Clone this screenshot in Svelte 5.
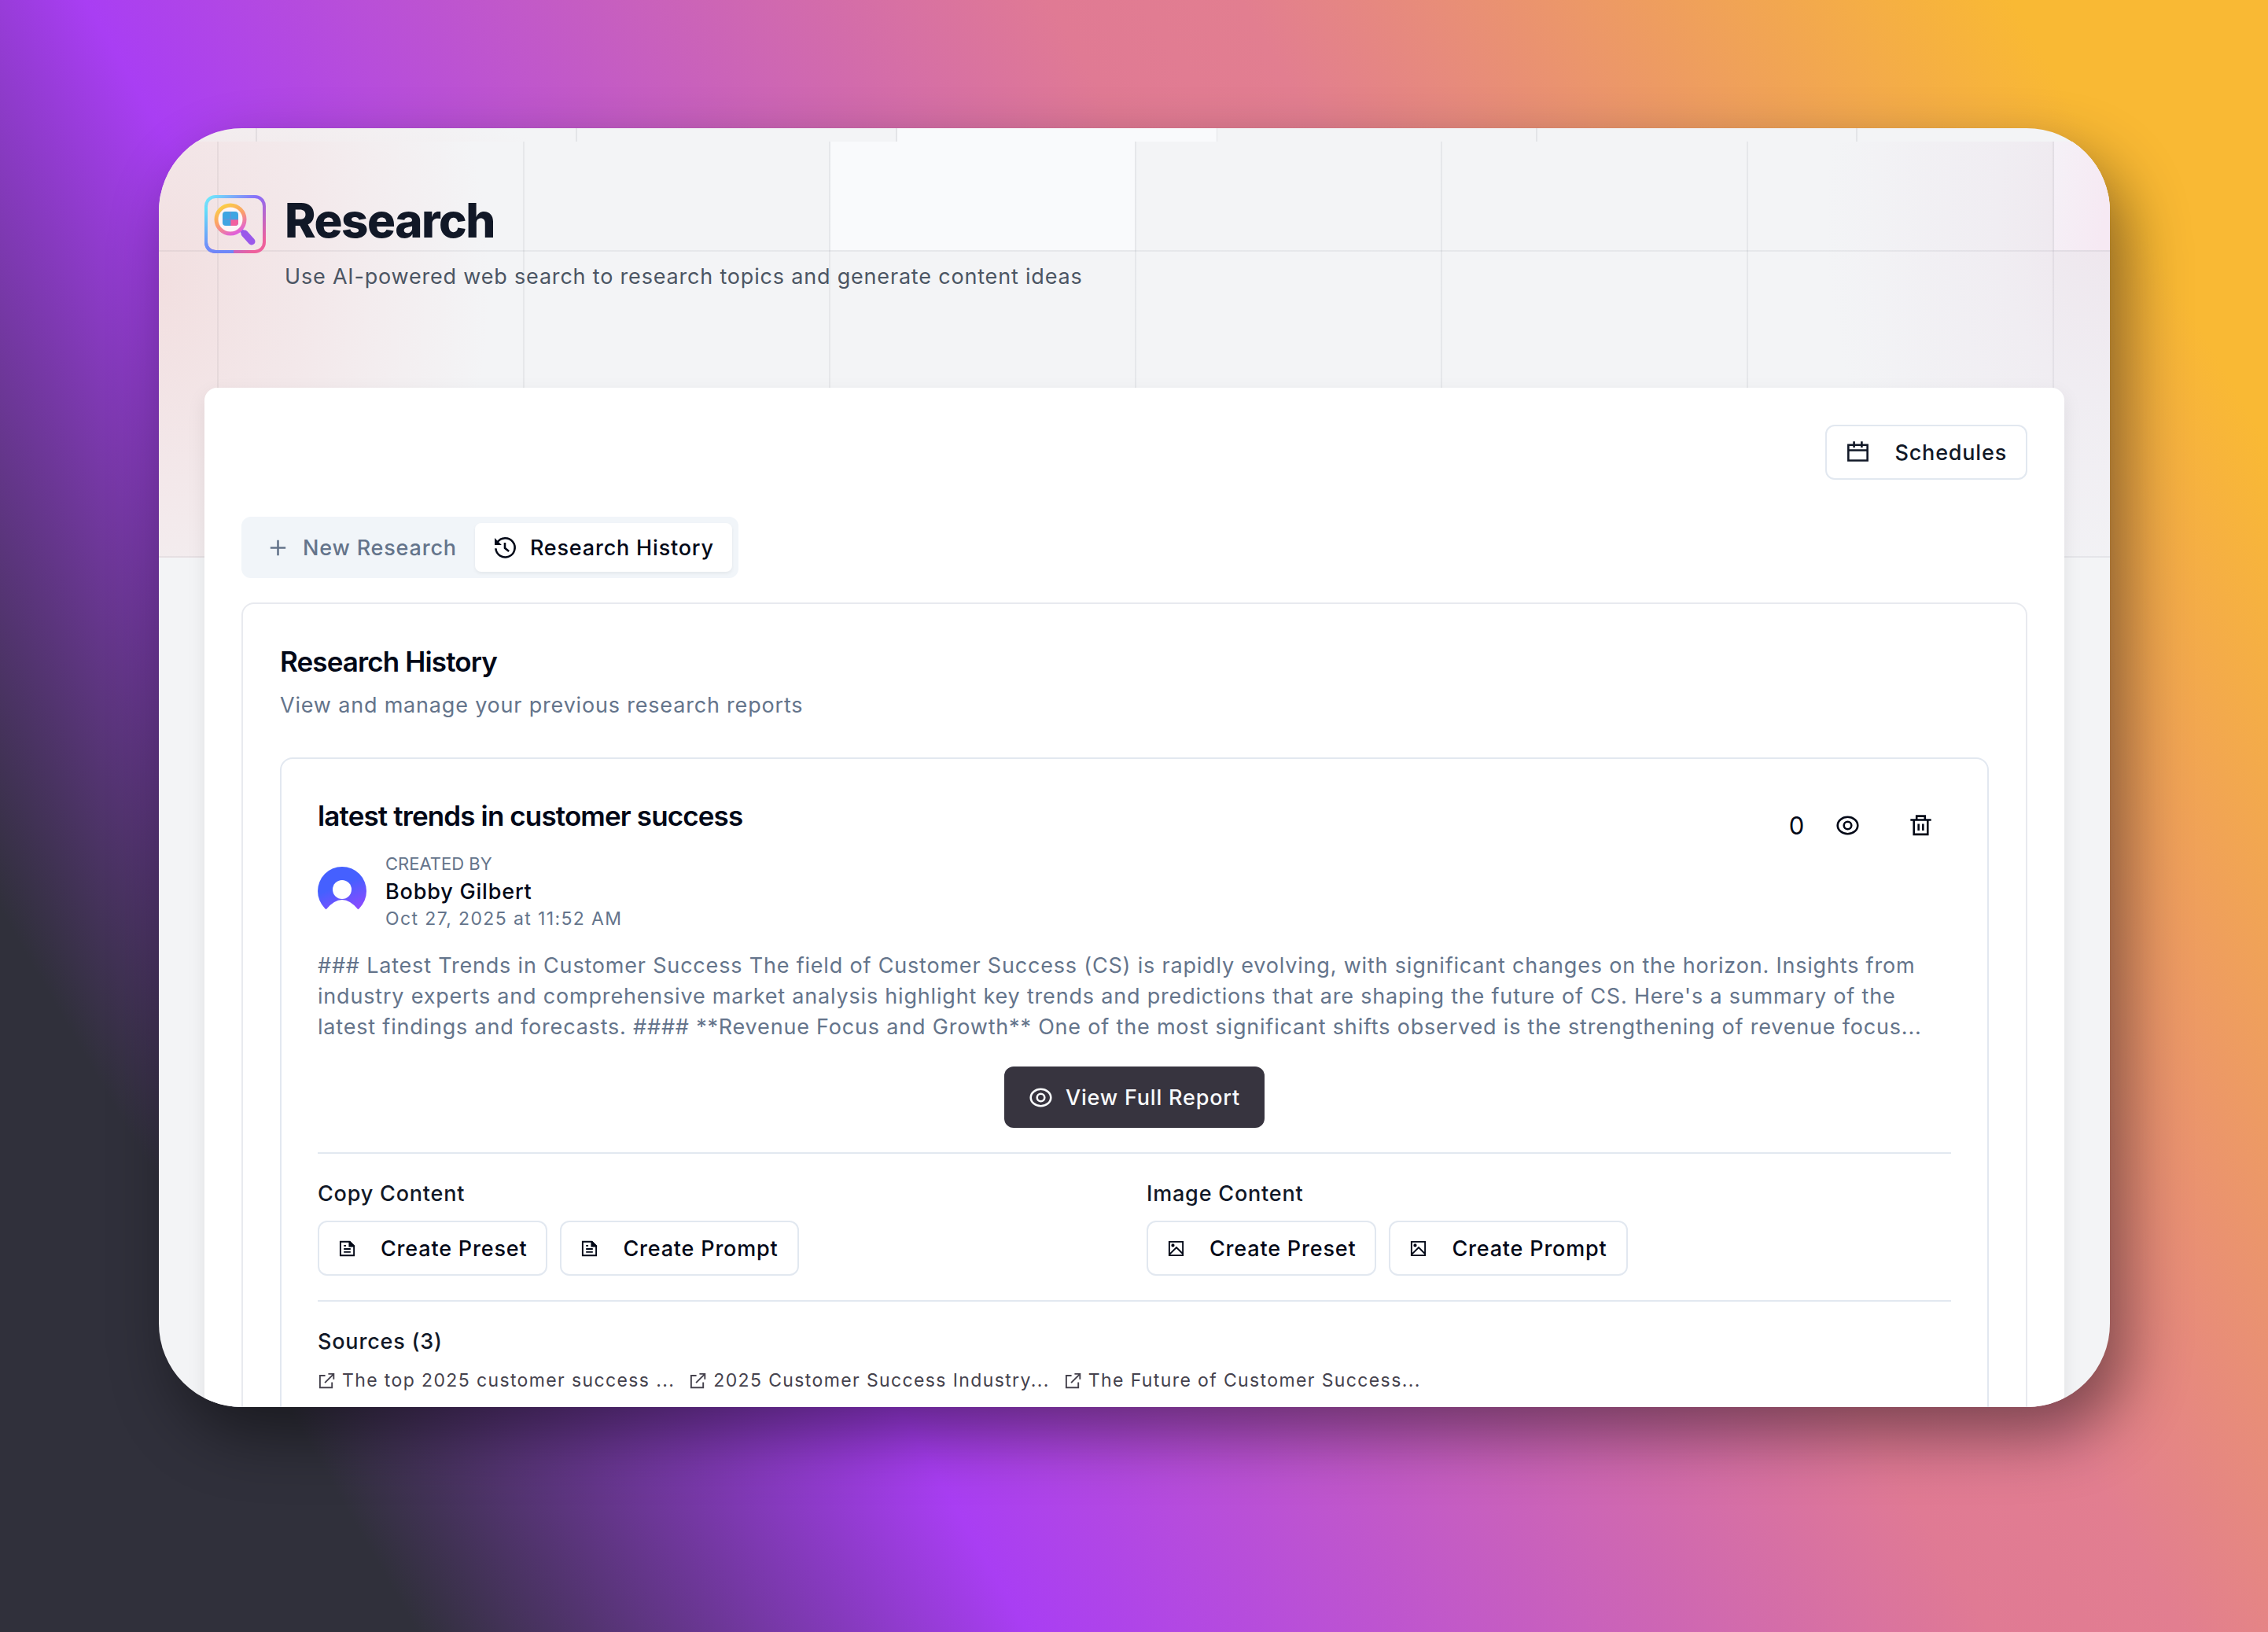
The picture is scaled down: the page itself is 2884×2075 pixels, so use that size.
<script>
let tab = 'history'

const tabs = [
    { id: 'new', label: 'New Research', icon: 'plus' },
    { id: 'history', label: 'Research History', icon: 'history' },
]

const report = {
    title: 'latest trends in customer success',
    author: 'Bobby Gilbert',
    created: 'Oct 27, 2025 at 11:52 AM',
    views: 0,
    summary: "### Latest Trends in Customer Success The field of Customer Success (CS) is rapidly evolving, with significant changes on the horizon. Insights from industry experts and comprehensive market analysis highlight key trends and predictions that are shaping the future of CS. Here's a summary of the latest findings and forecasts. #### **Revenue Focus and Growth** One of the most significant shifts observed is the strengthening of revenue focus...",
    sources: [
        'The top 2025 customer success ...',
        '2025 Customer Success Industry...',
        'The Future of Customer Success...',
    ],
}

const content = [
    { title: 'Copy Content', icon: 'doc' },
    { title: 'Image Content', icon: 'image' },
]
</script>

{#snippet icon(name, small = false)}
    <svg class="icon" class:small viewBox="0 0 24 24" fill="none" stroke="currentColor" stroke-width="2" aria-hidden="true">
        {#if name === 'plus'}
            <path d="M12 4.5v15M4.5 12h15" />
        {:else if name === 'history'}
            <path d="M4.2 6.6A9.4 9.4 0 1 1 2.6 12.6M11.6 7v5.2l4 3.2" />
            <path d="M1.6 2.4v6.8h6.8z" fill="currentColor" stroke="none" />
        {:else if name === 'calendar'}
            <path d="M2.6 4.4h18.8v15.4H2.6zM2.6 9.7h18.8M8.2 1v6M15.8 1v6" />
        {:else if name === 'eye'}
            <ellipse cx="12" cy="12" rx="9.9" ry="8.3" />
            <circle cx="12" cy="12" r="3.7" />
        {:else if name === 'trash'}
            <path d="M1.8 6.6h20.4M7.9 6.6V2.8h8.2v3.8M5.2 6.6v14.2h13.6V6.6M9.8 10.4v6.6M14.2 10.4v6.6" />
        {:else if name === 'doc'}
            <path d="M3 2.8h12l6 6v12.4H3z" />
            <path d="M14 2v8h8v-2l-6-6z" fill="currentColor" stroke="none" />
            <path d="M7.5 8.2h3M7.5 12.5h9M7.5 16.6h9" />
        {:else if name === 'image'}
            <path d="M3 3h18v18H3zM3.5 19.5l9-9 8.5 8.5" />
            <circle cx="7.8" cy="7.8" r="1.2" fill="currentColor" />
        {:else if name === 'external'}
            <path d="M10 5.2H3v16h16v-7M14 3h7.2v7.2M21 3.2L9.5 14.7" />
        {/if}
    </svg>
{/snippet}

<div class="stage">
    <main class="window">
        <div class="backdrop" aria-hidden="true">
            <div class="strip"></div>
            <div class="grid"></div>
        </div>

        <header class="page-head">
            <svg class="logo" viewBox="0 0 78 74" fill="none" aria-hidden="true">
                <defs>
                    <linearGradient id="frame" x1="0" y1="0" x2="1" y2="1">
                        <stop offset="0" stop-color="#6df0fb" />
                        <stop offset=".45" stop-color="#8a6cf8" />
                        <stop offset=".9" stop-color="#ee609c" />
                    </linearGradient>
                    <linearGradient id="frame-left" x1="0" y1="0" x2="0" y2="1">
                        <stop offset="0" stop-color="#62e4fa" />
                        <stop offset="1" stop-color="#6f86f8" />
                    </linearGradient>
                    <linearGradient id="lens" x1=".2" y1="0" x2=".7" y2="1">
                        <stop offset="0" stop-color="#fbd045" />
                        <stop offset=".5" stop-color="#fb9d6c" />
                        <stop offset="1" stop-color="#e05fdc" />
                    </linearGradient>
                    <linearGradient id="handle" x1="0" y1="0" x2="1" y2="1">
                        <stop offset="0" stop-color="#7a6cf5" />
                        <stop offset="1" stop-color="#a64fe6" />
                    </linearGradient>
                </defs>
                <rect x="2" y="2" width="74" height="70" rx="12" stroke="url(#frame)" stroke-width="4" />
                <path d="M2 15v44q0 13 13 13h22" stroke="url(#frame-left)" stroke-width="4" />
                <path d="M47 45l4 5" stroke="url(#handle)" stroke-width="5" />
                <path d="M51 49l9 10" stroke="#9a58ea" stroke-width="9" stroke-linecap="round" />
                <circle cx="33" cy="31" r="18" fill="#fdf5f7" stroke="url(#lens)" stroke-width="5" />
                <rect x="23" y="21" width="20" height="18" rx="4" fill="#3fa5e2" />
                <path d="M33 31h10v4q0 4-4 4h-6z" fill="#f2609f" />
                <path d="M33 21v18M23 31h20" stroke="#6a8fd6" stroke-width="1" />
            </svg>
            <div>
                <h1>Research</h1>
                <p class="lead">Use AI-powered web search to research topics and generate content ideas</p>
            </div>
        </header>

        <section class="panel">
            <div class="toolbar">
                <button class="btn">{@render icon('calendar')}Schedules</button>
            </div>

            <div class="tabs" role="tablist">
                {#each tabs as t}
                    <button class="tab" class:active={tab === t.id} role="tab" aria-selected={tab === t.id} on:click={() => tab = t.id}>
                        {@render icon(t.icon)}{t.label}
                    </button>
                {/each}
            </div>

            <section class="card">
                <h2>Research History</h2>
                <p class="desc">View and manage your previous research reports</p>

                <article class="card report">
                    <div class="report-head">
                        <div>
                            <h3>{report.title}</h3>
                            <div class="author">
                                <svg class="avatar" viewBox="0 0 62 62" aria-hidden="true">
                                    <defs>
                                        <linearGradient id="avatar" x1=".4" y1=".4" x2=".7" y2="1.1">
                                            <stop offset="0" stop-color="#4560ff" />
                                            <stop offset="1" stop-color="#a044ff" />
                                        </linearGradient>
                                    </defs>
                                    <circle cx="31" cy="31" r="31" fill="url(#avatar)" />
                                    <circle cx="31" cy="29" r="12" fill="#fff" />
                                    <path d="M0 62L11 54q20-24 40 0l11 8z" fill="#fff" />
                                </svg>
                                <div>
                                    <div class="caption">CREATED BY</div>
                                    <div class="name">{report.author}</div>
                                    <div class="date">{report.created}</div>
                                </div>
                            </div>
                        </div>
                        <div class="actions">
                            <span class="views">{report.views}</span>
                            <button class="ghost" aria-label="View report">{@render icon('eye')}</button>
                            <button class="ghost" aria-label="Delete report">{@render icon('trash')}</button>
                        </div>
                    </div>

                    <p class="summary">{report.summary}</p>

                    <button class="primary">{@render icon('eye')}View Full Report</button>

                    <div class="row columns">
                        {#each content as c}
                            <div>
                                <h4>{c.title}</h4>
                                <div class="buttons">
                                    <button class="btn">{@render icon(c.icon, true)}Create Preset</button>
                                    <button class="btn">{@render icon(c.icon, true)}Create Prompt</button>
                                </div>
                            </div>
                        {/each}
                    </div>

                    <div class="row">
                        <h4>Sources ({report.sources.length})</h4>
                        <div class="sources">
                            {#each report.sources as source}
                                <a href="#source">{@render icon('external', true)}{source}</a>
                            {/each}
                        </div>
                    </div>
                </article>
            </section>
        </section>
    </main>
</div>

<style>
:global(body) {
    margin: 0;
}

.stage {
    box-sizing: border-box;
    height: 100vh;
    padding: 163px 201px 286px 202px;
    overflow: hidden;
    background: linear-gradient(60deg, #30303b 13%, #a93ef3 32%, #e07a94 62%, #e27e90 68%, #f9b934 92%);
    font-family: Inter, "Liberation Sans", sans-serif;
    font-size: 27px;
    line-height: 39px;
    letter-spacing: 0.03em;
    color: #111827;
}

.window {
    position: relative;
    box-sizing: border-box;
    height: 100%;
    padding: 78px 58px 0;
    overflow: hidden;
    border-radius: 106px;
    background: #f3f4f6;
    box-shadow: 20px 36px 80px rgba(0, 0, 0, .45);
}

.backdrop {
    position: absolute;
    inset: 0;
}

.strip {
    height: 17px;
    background:
        linear-gradient(90deg, transparent 939px, #f9fafc 939px 1345px, transparent 1345px),
        linear-gradient(90deg, rgba(17, 24, 39, .07) 2px, transparent 2px) 123px 0 / 407px 100%,
        radial-gradient(600px 300px at 0 200px, #f2dedf, transparent);
}

.grid {
    height: 529px;
    background:
        linear-gradient(90deg, rgba(17, 24, 39, .06) 2px, transparent 2px) 74px 0 / 389px 100%,
        linear-gradient(rgba(17, 24, 39, .06) 2px, transparent 2px) 0 138px / 100% 389px,
        linear-gradient(#f9fafc, #f9fafc) 854px 0 / 387px 138px no-repeat,
        linear-gradient(100deg, #f5f1f7, #f6e9f3 80px) 2410px 0 / 387px 138px no-repeat,
        radial-gradient(420px 560px at 0 180px, #f2dfe0, #f3e8ea 45%, transparent),
        radial-gradient(360px 560px at 100% 100px, #eee6ed, #f0edf2 40%, transparent);
}

.page-head {
    position: relative;
    display: flex;
    gap: 24px;
    margin-bottom: 122px;
}

.logo {
    width: 78px;
    height: 74px;
    margin-top: 7px;
}

h1, h2, h3, h4, p {
    margin: 0;
}

h1 {
    font-size: 60px;
    line-height: 78px;
    font-weight: 800;
    letter-spacing: -0.025em;
}

.lead {
    margin-top: 13px;
    color: #4b5563;
}

.panel {
    position: relative;
    margin-top: 1px;
    padding: 47px;
    border-radius: 16px;
    background: #fff;
    box-shadow: 0 8px 24px rgba(0, 0, 0, .08);
}

.toolbar {
    display: flex;
    justify-content: flex-end;
    margin-bottom: 47px;
}

button {
    display: inline-flex;
    align-items: center;
    box-sizing: border-box;
    font: inherit;
    font-weight: 500;
    letter-spacing: inherit;
    color: inherit;
    border: 0;
    background: none;
    cursor: pointer;
}

.icon {
    flex: none;
    width: 31px;
    height: 31px;
}

.icon.small {
    width: 23px;
    height: 23px;
}

.btn {
    gap: 31px;
    height: 70px;
    padding: 0 24px;
    border: 2px solid #e2e8f0;
    border-radius: 12px;
    background: #fff;
}

.tabs {
    display: inline-flex;
    padding: 8px;
    border-radius: 12px;
    background: #f1f5f9;
    color: #64748b;
}

.tab {
    gap: 16px;
    height: 62px;
    padding: 0 23px;
    border-radius: 8px;
}

.tab.active {
    background: #fff;
    color: #020817;
    box-shadow: 0 2px 4px rgba(0, 0, 0, .06);
}

.card {
    margin-top: 31px;
    padding: 47px;
    border: 2px solid #e8eaef;
    border-radius: 16px;
    color: #020817;
}

h2, h3 {
    font-size: 35px;
    line-height: 47px;
    font-weight: 600;
    letter-spacing: -0.025em;
}

h2 {
    margin-top: 3px;
}

.desc {
    margin-top: 12px;
    color: #64748b;
}

.report {
    margin-top: 47px;
    padding: 49px 46px;
    border-color: #e2e8f0;
}

.report-head {
    display: flex;
    justify-content: space-between;
    align-items: flex-start;
}

.author {
    display: flex;
    align-items: center;
    gap: 24px;
    margin-top: 21px;
}

.avatar {
    width: 62px;
    height: 62px;
}

.caption {
    font-size: 22px;
    line-height: 32px;
    letter-spacing: 0;
    color: #64748b;
}

.name {
    font-weight: 500;
}

.date {
    font-size: 23px;
    line-height: 31px;
    letter-spacing: 0.06em;
    color: #64748b;
}

.actions {
    display: flex;
    align-items: center;
    gap: 16px;
}

.views {
    font-size: 31px;
}

.ghost {
    height: 70px;
    padding: 0 23px;
}

.summary {
    margin-top: 24px;
    padding-right: 16px;
    color: #64748b;
}

.primary {
    display: flex;
    gap: 16px;
    height: 78px;
    margin: 31px auto;
    padding: 0 31px;
    border-radius: 12px;
    background: #37343f;
    color: #f8fafc;
}

.row {
    padding: 31px 0;
    border-top: 2px solid #e2e8f0;
}

.columns {
    display: grid;
    grid-template-columns: 1fr 1fr;
    gap: 31px;
}

h4 {
    margin-bottom: 15px;
    font-size: 27px;
    font-weight: 500;
    color: #111827;
}

.buttons {
    display: flex;
    gap: 16px;
}

.sources {
    display: flex;
    flex-wrap: wrap;
    gap: 18px;
}

.sources a {
    display: inline-flex;
    align-items: center;
    gap: 8px;
    font-size: 23px;
    line-height: 31px;
    letter-spacing: 0.06em;
    color: #45424d;
    text-decoration: none;
}
</style>
